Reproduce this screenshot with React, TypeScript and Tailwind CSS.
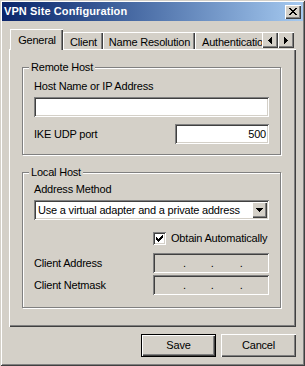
import React from "react";

const raised =
  "shadow-[inset_1px_1px_0_#ffffff,inset_-1px_-1px_0_#404040,inset_-2px_-2px_0_#808080]";
const sunken =
  "shadow-[inset_1px_1px_0_#808080,inset_-1px_-1px_0_#ffffff,inset_2px_2px_0_#404040,inset_-2px_-2px_0_#d4d0c8]";
const etched =
  "border border-[#808080] shadow-[inset_1px_1px_0_#ffffff,1px_1px_0_#ffffff]";

const CLOSE = [
  "XX....XX",
  ".XX..XX.",
  "..XXXX..",
  "...XX...",
  "..XXXX..",
  ".XX..XX.",
  "XX....XX",
];
const DOWN = ["XXXXXXX", ".XXXXX.", "..XXX..", "...X..."];
const LEFT = ["...X", "..XX", ".XXX", "XXXX", ".XXX", "..XX", "...X"];
const RIGHT = ["X...", "XX..", "XXX.", "XXXX", "XXX.", "XX..", "X..."];
const CHECK = [
  "......X",
  ".....XX",
  "X...XXX",
  "XX.XXX.",
  "XXXXX..",
  ".XXX...",
  "..X....",
];

function Pixels({ rows }: { rows: string[] }) {
  const h = rows.length;
  const w = rows[0].length;
  return (
    <svg width={w} height={h} viewBox={`0 0 ${w} ${h}`} shapeRendering="crispEdges" className="block">
      {rows.flatMap((r, y) =>
        r.split("").map((c, x) =>
          c === "X" ? <rect key={`${x}-${y}`} x={x} y={y} width={1} height={1} fill="#000" /> : null
        )
      )}
    </svg>
  );
}

function IpBox() {
  return (
    <div className={`w-[116px] h-[20px] bg-[#d4d0c8] ${sunken} flex items-center`}>
      <span className="ml-[30px]">.</span>
      <span className="ml-[25px]">.</span>
      <span className="ml-[26px]">.</span>
    </div>
  );
}

export default function App() {
  return (
    <div className="w-[305px] h-[366px] bg-[#d4d0c8] flex flex-col font-['Liberation_Sans',Arial,sans-serif] text-[11px] leading-[13px] text-black tracking-[-0.2px] shadow-[inset_1px_1px_0_#d4d0c8,inset_-1px_-1px_0_#404040,inset_2px_2px_0_#ffffff,inset_-2px_-2px_0_#808080]">
      {/* Title bar */}
      <div className="mx-[2px] mt-[2px] h-[19px] shrink-0 flex items-center justify-between bg-linear-to-r from-[#0a246a] to-[#a6caf0] pl-[2px] pr-[2px]">
        <span className="text-white font-bold tracking-[0.1px]">VPN Site Configuration</span>
        <div className={`w-[16px] h-[14px] bg-[#d4d0c8] ${raised} flex items-center justify-center pb-[1px]`}>
          <Pixels rows={CLOSE} />
        </div>
      </div>

      {/* Tabs */}
      <div className="relative z-10 mt-[8px] mx-[9px] h-[21px] shrink-0 flex items-end">
        <div className="flex-1 h-full flex items-end overflow-hidden pl-[1px]">
          <div className="h-[21px] w-[53px] shrink-0 bg-[#d4d0c8] border-l border-t border-white shadow-[inset_-1px_0_0_#404040,inset_-2px_0_0_#808080] flex justify-center pt-[4px]">
            General
          </div>
          <div className="h-[17px] mb-[1px] w-[40px] shrink-0 border-l border-t border-white shadow-[inset_-1px_0_0_#404040,inset_-2px_0_0_#808080] flex justify-center pt-[3px]">
            Client
          </div>
          <div className="h-[17px] mb-[1px] w-[92px] shrink-0 border-l border-t border-white shadow-[inset_-1px_0_0_#404040,inset_-2px_0_0_#808080] flex justify-center pt-[3px] whitespace-nowrap">
            Name Resolution
          </div>
          <div className="h-[17px] mb-[1px] w-[86px] shrink-0 border-l border-t border-white shadow-[inset_-1px_0_0_#404040,inset_-2px_0_0_#808080] flex pl-[6px] pt-[3px] whitespace-nowrap">
            Authentication
          </div>
        </div>
        <div className="flex mb-[2px] mr-[2px]">
          <div className={`w-[16px] h-[16px] bg-[#d4d0c8] ${raised} flex items-center justify-center`}>
            <Pixels rows={LEFT} />
          </div>
          <div className={`w-[16px] h-[16px] bg-[#d4d0c8] ${raised} flex items-center justify-center`}>
            <Pixels rows={RIGHT} />
          </div>
        </div>
      </div>

      {/* Tab panel */}
      <div className="-mt-[1px] mx-[9px] h-[278px] shrink-0 flex flex-col pl-[13px] shadow-[inset_1px_1px_0_#ffffff,inset_-1px_-1px_0_#404040,inset_-2px_-2px_0_#808080]">
        {/* Remote Host */}
        <div className={`relative mt-[18px] w-[259px] h-[88px] ${etched} pt-[12px] px-[11px] flex flex-col`}>
          <span className="absolute left-[6px] -top-[7px] bg-[#d4d0c8] px-[2px]">Remote Host</span>
          <span>Host Name or IP Address</span>
          <div className={`mt-[4px] h-[20px] w-full bg-white ${sunken}`} />
          <div className="mt-[7px] h-[20px] flex items-center justify-between">
            <span>IKE UDP port</span>
            <div className={`w-[94px] h-[20px] bg-white ${sunken} flex items-center justify-end pr-[3px]`}>500</div>
          </div>
        </div>

        {/* Local Host */}
        <div className={`relative mt-[17px] w-[259px] h-[136px] ${etched} pt-[10px] px-[11px] flex flex-col`}>
          <span className="absolute left-[6px] -top-[7px] bg-[#d4d0c8] px-[2px]">Local Host</span>
          <span>Address Method</span>
          <div className={`mt-[4px] h-[20px] w-full bg-white ${sunken} flex items-center p-[2px]`}>
            <span className="flex-1 pl-[2px] whitespace-nowrap overflow-hidden">
              Use a virtual adapter and a private address
            </span>
            <div className={`w-[15px] h-[16px] shrink-0 bg-[#d4d0c8] ${raised} flex items-center justify-center`}>
              <Pixels rows={DOWN} />
            </div>
          </div>
          <div className="mt-[12px] ml-[119px] h-[13px] flex items-center gap-[5px]">
            <div className={`w-[13px] h-[13px] shrink-0 bg-white ${sunken} flex items-center justify-center`}>
              <Pixels rows={CHECK} />
            </div>
            <span className="whitespace-nowrap">Obtain Automatically</span>
          </div>
          <div className="mt-[8px] h-[20px] flex items-center justify-between">
            <span>Client Address</span>
            <IpBox />
          </div>
          <div className="mt-[2px] h-[20px] flex items-center justify-between">
            <span>Client Netmask</span>
            <IpBox />
          </div>
        </div>
      </div>

      {/* Buttons */}
      <div className="mt-[7px] mr-[9px] flex justify-end gap-[5px]">
        <div className={`w-[75px] h-[23px] border border-black bg-[#d4d0c8] ${raised} flex items-center justify-center`}>
          Save
        </div>
        <div className={`w-[75px] h-[23px] bg-[#d4d0c8] ${raised} flex items-center justify-center`}>
          Cancel
        </div>
      </div>
    </div>
  );
}
